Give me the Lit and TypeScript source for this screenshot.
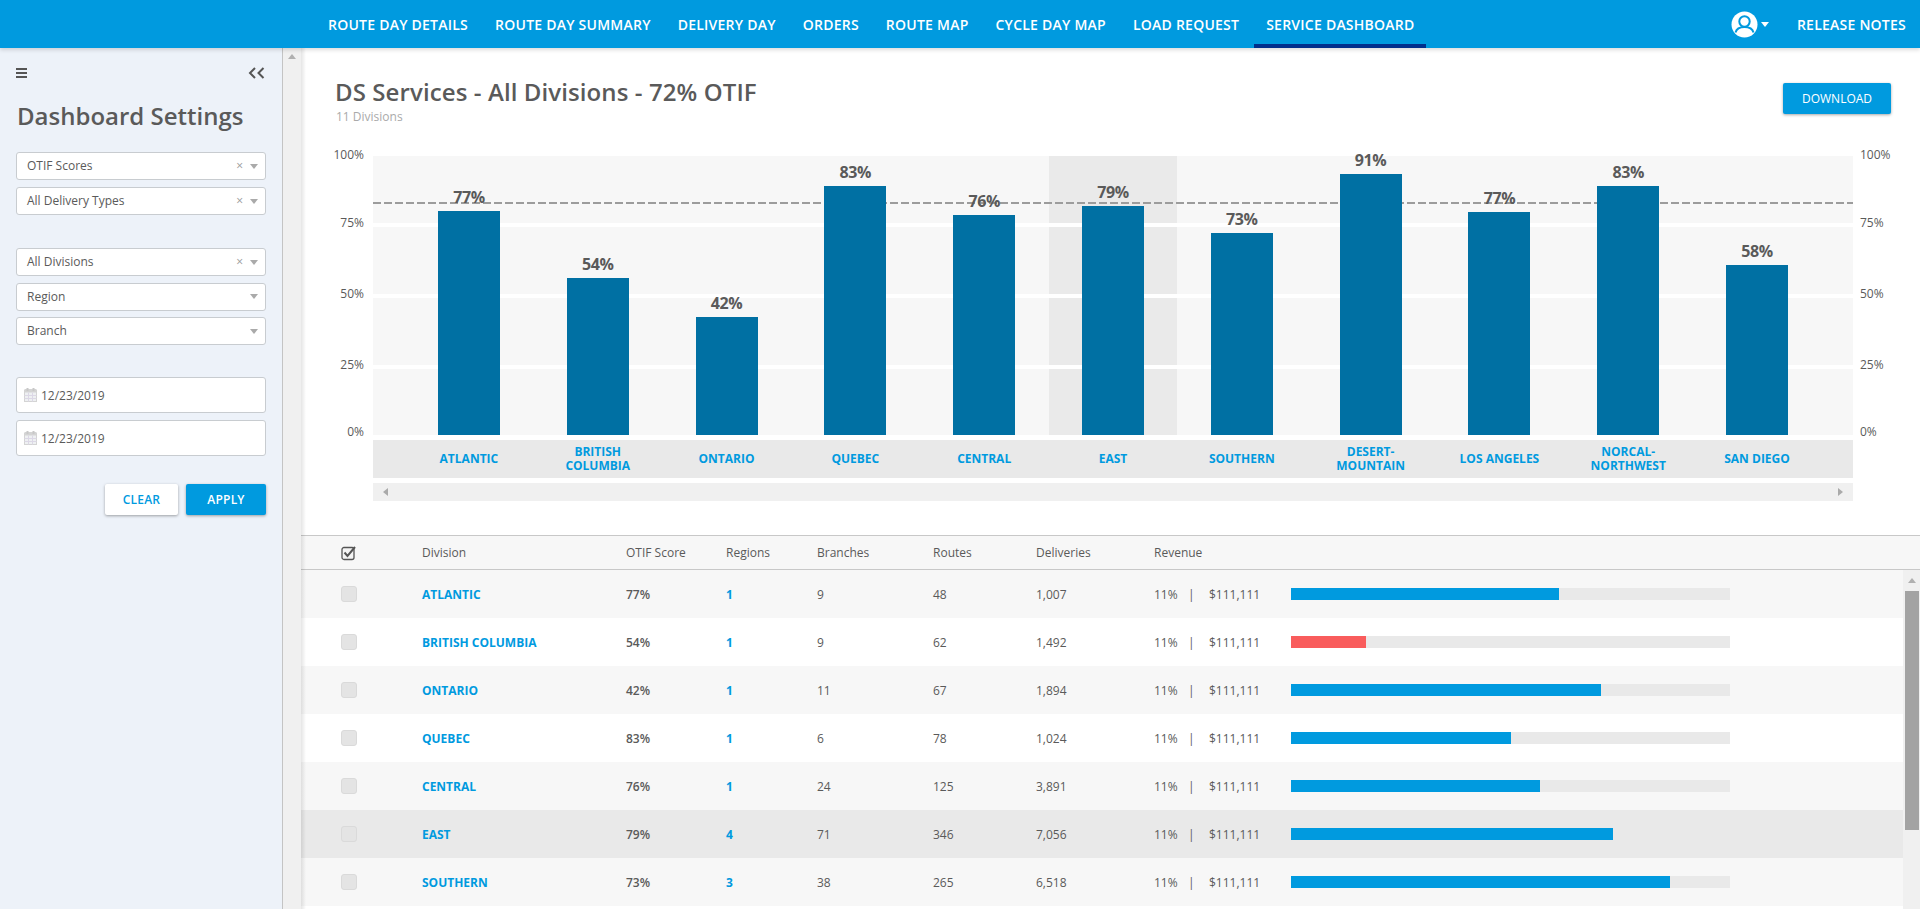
import { LitElement, html, css, svg } from "lit";
import { customElement } from "lit/decorators.js";

const NAV = ["Route Day Details", "Route Day Summary", "Delivery Day", "Orders", "Route Map", "Cycle Day Map", "Load Request", "Service Dashboard"];
const COLS = [
  { name: ["Atlantic"], pct: 77, h: 224 },
  { name: ["British", "Columbia"], pct: 54, h: 157 },
  { name: ["Ontario"], pct: 42, h: 118 },
  { name: ["Quebec"], pct: 83, h: 249 },
  { name: ["Central"], pct: 76, h: 220 },
  { name: ["East"], pct: 79, h: 229, active: true },
  { name: ["Southern"], pct: 73, h: 202 },
  { name: ["Desert-", "Mountain"], pct: 91, h: 261 },
  { name: ["Los Angeles"], pct: 77, h: 223 },
  { name: ["NorCal-", "Northwest"], pct: 83, h: 249 },
  { name: ["San Diego"], pct: 58, h: 170 },
];
const ROWS = [
  { n: "Atlantic", s: "77%", r: 1, b: 9, ro: 48, d: "1,007", w: 61 },
  { n: "British Columbia", s: "54%", r: 1, b: 9, ro: 62, d: "1,492", w: 17.1, low: true },
  { n: "Ontario", s: "42%", r: 1, b: 11, ro: 67, d: "1,894", w: 70.6 },
  { n: "Quebec", s: "83%", r: 1, b: 6, ro: 78, d: "1,024", w: 50.1 },
  { n: "Central", s: "76%", r: 1, b: 24, ro: 125, d: "3,891", w: 56.7 },
  { n: "East", s: "79%", r: 4, b: 71, ro: 346, d: "7,056", w: 73.3, active: true },
  { n: "Southern", s: "73%", r: 3, b: 38, ro: 265, d: "6,518", w: 86.4 },
];
const AXIS = ["100%", "75%", "50%", "25%", "0%"];

const caret = html`<span class="caret"></span>`;
const calendar = svg`<svg class="cal" width="13" height="14" viewBox="0 0 13 14"><rect x="0.5" y="2.5" width="12" height="11" fill="#eef0f2" stroke="#d4d4d4"/><rect x="0.5" y="1" width="12" height="3.5" fill="#d4d4d4"/><rect x="2.5" y="0" width="2" height="3" fill="#c8c8c8"/><rect x="8.5" y="0" width="2" height="3" fill="#c8c8c8"/><path d="M4.5 4.5v9M8.5 4.5v9M.5 7.5h12M.5 10.5h12" stroke="#dcd8e6" stroke-width="1" fill="none"/></svg>`;

@customElement("app-root")
export class AppRoot extends LitElement {
  static styles = css`
    :host { display: flex; flex-direction: column; height: 909px; overflow: hidden; background: #fff; font-family: "Open Sans", "Noto Sans", sans-serif; font-size: 12px; color: #5a5a5a; }
    * { box-sizing: border-box; }
    .header { flex: none; height: 48px; background: #009adf; display: flex; align-items: stretch; padding-left: 316px; color: #fff; box-shadow: 0 2px 4px rgba(0,0,0,.14); position: relative; z-index: 3; }
    .nav { display: flex; gap: 3px; }
    .nav a { display: flex; align-items: center; padding: 0 12px; font-size: 14px; font-weight: 600; text-transform: uppercase; white-space: nowrap; border-bottom: 4px solid transparent; border-top: 4px solid transparent; letter-spacing: .24px; }
    .nav a.on { border-bottom-color: #012f8c; }
    .right { margin-left: auto; display: flex; align-items: center; padding-right: 14px; }
    .user { display: flex; align-items: center; gap: 3px; margin-right: 28px; }
    .ucaret { width: 0; height: 0; border: 4px solid transparent; border-top: 5px solid #fff; border-bottom: 0; }
    .rel { font-size: 14px; font-weight: 600; letter-spacing: .24px; }
    .body { flex: 1; display: flex; min-height: 0; }
    .side { flex: none; width: 283px; background: #edf2f9; border-right: 1px solid #c4c4c4; padding: 20px 16px 0 16px; }
    .sidetop { display: flex; justify-content: space-between; align-items: center; height: 10px; }
    .burger { width: 11px; height: 10px; border-top: 2px solid #555; border-bottom: 2px solid #555; position: relative; }
    .burger::after { content: ""; position: absolute; left: 0; right: 0; top: 2px; height: 2px; background: #555; }
    .side h2 { margin: 21px 0 0 1px; font-size: 24px; line-height: 33px; font-weight: 600; color: #5a5a5a; white-space: nowrap; }
    .group { display: flex; flex-direction: column; gap: 7px; }
    .g1 { margin-top: 20px; }
    .g2 { margin-top: 33px; gap: 6.5px; }
    .g3 { margin-top: 32px; gap: 7px; }
    .sel { height: 28px; width: 250px; background: #fff; border: 1px solid #c8ccd0; border-radius: 3px; display: flex; align-items: center; padding: 0 7px 0 10px; line-height: 1; }
    .sel .x { margin-left: auto; color: #999; font-size: 12px; margin-right: 7px; }
    .sel .lone { margin-left: auto; display: flex; }
    .caret { width: 0; height: 0; border-left: 4px solid transparent; border-right: 4px solid transparent; border-top: 5px solid #aaa; }
    .date { height: 36px; width: 250px; background: #fff; border: 1px solid #c8ccd0; border-radius: 3px; display: flex; align-items: center; gap: 4px; padding: 0 0 0 7px; }
    .btns { margin-top: 28px; width: 250px; display: flex; justify-content: flex-end; gap: 8px; }
    .btn { height: 31px; display: flex; align-items: center; justify-content: center; font-weight: 600; border-radius: 2px; box-shadow: 0 1px 3px rgba(0,0,0,.35); font-size: 12px; letter-spacing: .2px; }
    .clear { width: 73px; background: #fff; color: #009adf; }
    .apply { width: 80px; background: #009adf; color: #fff; }
    .vscroll { flex: none; width: 18px; background: #f0f0f0; display: flex; flex-direction: column; align-items: center; padding-top: 6px; }
    .up { width: 0; height: 0; border-left: 4px solid transparent; border-right: 4px solid transparent; border-bottom: 5px solid #b0b0b0; }
    .main { flex: 1; min-width: 0; display: flex; flex-direction: column; position: relative; }
    .main::after { content: ""; position: absolute; inset: 0 auto 0 0; width: 5px; background: linear-gradient(to right, rgba(0,0,0,.1), rgba(0,0,0,0)); pointer-events: none; z-index: 2; }
    .top { display: flex; justify-content: space-between; padding: 27px 29px 0 34px; height: 100px; flex: none; }
    .top h1 { margin: 0; font-size: 24px; line-height: 33px; font-weight: 600; color: #5a5a5a; letter-spacing: .1px; }
    .sub { color: #aaa; font-size: 12px; line-height: 16px; margin-top: 1px; padding-left: 1px; }
    .dl { width: 108px; height: 31px; margin-top: 8px; background: #009adf; color: #fff; display: flex; align-items: center; justify-content: center; border-radius: 2px; box-shadow: 0 1px 3px rgba(0,0,0,.35); font-size: 12px; }
    .chart { flex: none; height: 379px; display: grid; grid-template-columns: 72px 1480px 67px; grid-template-rows: 279px 5px 38px 5px 18px; align-content: start; margin-top: 8px; }
    .axis { grid-row: 1; display: grid; grid-template-rows: 68px 71px 71px 67px 16px; margin-top: -9px; font-size: 12px; line-height: 16px; height: 293px; }
    .axis.l { text-align: right; padding-right: 9px; }
    .axis.r { padding-left: 7px; }
    .plot { grid-row: 1; grid-column: 2; background: #f7f7f7; position: relative; display: flex; padding: 0 31.5px; }
    .line { position: absolute; left: 0; right: 0; top: 46px; height: 2px; background: repeating-linear-gradient(to right, #9c9c9c 0 8px, transparent 8px 11px); }
    .grid { position: absolute; left: 0; right: 0; height: 4px; background: #fff; }
    .col { flex: 1; min-width: 0; display: flex; flex-direction: column; justify-content: flex-end; align-items: center; }
    .col.on { background: #eaeaea; }
    .bar { flex: none; width: 62px; background: #0070a3; position: relative; z-index: 1; }
    .val { flex: none; position: relative; z-index: 1; font-size: 16px; line-height: 22px; font-weight: 700; letter-spacing: -.4px; margin-bottom: 3px; color: #5a5a5a; }
    .cats { grid-row: 3; grid-column: 2; background: #e9e9e9; display: flex; padding: 0 31.5px; }
    .cat { flex: 1; min-width: 0; display: flex; align-items: center; justify-content: center; text-align: center; text-transform: uppercase; font-weight: 700; color: #009adf; font-size: 12px; line-height: 14px; }
    .hs { grid-row: 5; grid-column: 2; background: #f0f0f0; display: flex; justify-content: space-between; align-items: center; padding: 0 10px; }
    .la { width: 0; height: 0; border-top: 4px solid transparent; border-bottom: 4px solid transparent; border-right: 5px solid #aaa; }
    .ra { width: 0; height: 0; border-top: 4px solid transparent; border-bottom: 4px solid transparent; border-left: 5px solid #aaa; }
    .table { flex: 1; min-height: 0; display: flex; flex-direction: column; }
    .row { display: grid; grid-template-columns: 40px 81px 204px 100px 91px 116px 103px 118px 1fr; align-items: center; }
    .head { flex: none; height: 35px; background: #f7f7f7; border-top: 1px solid #c8c8c8; border-bottom: 1px solid #c8c8c8; }
    .bodyrow { flex: 1; min-height: 0; display: flex; }
    .rows { flex: 1; min-width: 0; }
    .tr { height: 48px; background: #fff; }
    .tr:nth-child(odd) { background: #f7f7f7; }
    .tr.on { background: #e9e9e9; }
    .cb { width: 16px; height: 16px; border-radius: 3px; background: #e4e4e4; border: 1px solid #dadada; grid-column: 2; }
    .head svg { grid-column: 2; }
    .link { color: #009adf; font-weight: 700; text-transform: uppercase; }
    .score { font-weight: 600; }
    .num { color: #009adf; font-weight: 700; }
    .rev { display: flex; align-items: center; white-space: nowrap; }
    .rev .p { width: 24px; }
    .rev .s { width: 31px; padding-left: 10px; }
    .rev .m { width: 82px; }
    .track { flex: none; width: 439px; height: 12px; background: #e9e9e9; }
    .fill { height: 100%; background: #009adf; }
    .fill.low { background: #f95c5c; }
    .tscroll { flex: none; width: 17px; background: #f0f0f0; display: flex; flex-direction: column; align-items: center; padding-top: 8px; }
    .thumb { width: 14px; height: 239px; background: #a3a3a3; margin-top: 8px; margin-left: 1px; }
  `;

  render() {
    return html`
      <div class="header">
        <div class="nav">
          ${NAV.map((n, i) => html`<a class=${i === 7 ? "on" : ""}>${n}</a>`)}
        </div>
        <div class="right">
          <div class="user">
            <svg width="27" height="27" viewBox="0 0 27 27">
              <circle cx="13.5" cy="13.5" r="13" fill="#fff"/>
              <circle cx="13.5" cy="10.5" r="5.2" fill="none" stroke="#009adf" stroke-width="2"/>
              <path d="M4.5 21.5c1-4 4.5-5.5 9-5.5s8 1.500 9 5.500" fill="none" stroke="#009adf" stroke-width="2"/>
            </svg>
            <span class="ucaret"></span>
          </div>
          <span class="rel">RELEASE NOTES</span>
        </div>
      </div>
      <div class="body">
        <aside class="side">
          <div class="sidetop">
            <div class="burger"></div>
            <svg width="18" height="12" viewBox="0 0 18 12"><path d="M7 1 2 6l5 5M15.500 1l-5 5 5 5" fill="none" stroke="#555" stroke-width="2"/></svg>
          </div>
          <h2>Dashboard Settings</h2>
          <div class="group g1">
            <div class="sel"><span>OTIF Scores</span><span class="x">×</span>${caret}</div>
            <div class="sel"><span>All Delivery Types</span><span class="x">×</span>${caret}</div>
          </div>
          <div class="group g2">
            <div class="sel"><span>All Divisions</span><span class="x">×</span>${caret}</div>
            <div class="sel"><span>Region</span><span class="lone">${caret}</span></div>
            <div class="sel"><span>Branch</span><span class="lone">${caret}</span></div>
          </div>
          <div class="group g3">
            <div class="date">${calendar}<span>12/23/2019</span></div>
            <div class="date">${calendar}<span>12/23/2019</span></div>
          </div>
          <div class="btns"><div class="btn clear">CLEAR</div><div class="btn apply">APPLY</div></div>
        </aside>
        <div class="vscroll"><span class="up"></span></div>
        <main class="main">
          <div class="top">
            <div><h1>DS Services - All Divisions - 72% OTIF</h1><div class="sub">11 Divisions</div></div>
            <div class="dl">DOWNLOAD</div>
          </div>
          <div class="chart">
            <div class="axis l">${AXIS.map((a) => html`<span>${a}</span>`)}</div>
            <div class="plot">
              ${COLS.map(
                (c) => html`<div class="col ${c.active ? "on" : ""}">
                  <span class="val">${c.pct}%</span>
                  <div class="bar" style="height:${c.h}px"></div>
                </div>`
              )}
              <div class="grid" style="top:67px"></div>
              <div class="grid" style="top:138px"></div>
              <div class="grid" style="top:209px"></div>
              <div class="line"></div>
            </div>
            <div class="axis r" style="grid-column:3">${AXIS.map((a) => html`<span>${a}</span>`)}</div>
            <div class="cats">
              ${COLS.map((c) => html`<div class="cat"><span>${c.name.map((l, i) => html`${i ? html`<br />` : ""}${l}`)}</span></div>`)}
            </div>
            <div class="hs"><span class="la"></span><span class="ra"></span></div>
          </div>
          <div class="table">
            <div class="row head">
              <svg width="17" height="16" viewBox="0 0 17 16">
                <rect x="1" y="2.500" width="12" height="12" rx="2" fill="#f4f4f4" stroke="#555" stroke-width="1.300"/>
                <path d="M3.500 7.500l3 3.500 7.500-9" fill="none" stroke="#555" stroke-width="2"/>
              </svg>
              <span>Division</span><span>OTIF Score</span><span>Regions</span><span>Branches</span><span>Routes</span><span>Deliveries</span><span>Revenue</span>
            </div>
            <div class="bodyrow">
              <div class="rows">
                ${ROWS.map(
                  (r) => html`<div class="row tr ${r.active ? "on" : ""}">
                    <span class="cb"></span>
                    <span class="link">${r.n}</span>
                    <span class="score">${r.s}</span>
                    <span class="num">${r.r}</span>
                    <span>${r.b}</span>
                    <span>${r.ro}</span>
                    <span>${r.d}</span>
                    <div class="rev">
                      <span class="p">11%</span><span class="s">|</span><span class="m">$111,111</span>
                      <div class="track"><div class="fill ${r.low ? "low" : ""}" style="width:${r.w}%"></div></div>
                    </div>
                  </div>`
                )}
              </div>
              <div class="tscroll"><span class="up"></span><div class="thumb"></div></div>
            </div>
          </div>
        </main>
      </div>
    `;
  }
}
